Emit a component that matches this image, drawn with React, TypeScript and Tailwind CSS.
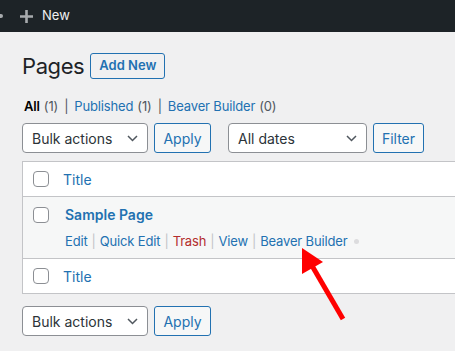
import React from "react";

const Chevron = () => (
  <svg width="11" height="7" viewBox="0 0 11 7" fill="none">
    <path d="M1 1L5.5 5.5L10 1" stroke="#50575e" strokeWidth="1.5" />
  </svg>
);

const Select = ({ label, width }: { label: string; width: string }) => (
  <div
    className={`${width} h-[30px] flex items-center justify-between pl-[9px] pr-[9px] bg-white border border-[#8c8f94] rounded-[4px] text-[14px] text-[#2c3338]`}
  >
    <span>{label}</span>
    <Chevron />
  </div>
);

const Button = ({ label, width }: { label: string; width: string }) => (
  <div
    className={`${width} h-[30px] flex items-center justify-center bg-[#f6f7f7] border border-[#2271b1] rounded-[3px] text-[14px] text-[#2271b1]`}
  >
    {label}
  </div>
);

const Checkbox = () => (
  <div className="w-4 h-4 shrink-0 bg-white border border-[#8c8f94] rounded-[4px]" />
);

const Sep = () => <span className="mx-[4px] text-[#c3c4c7]">|</span>;

export default function App() {
  return (
    <div
      className="relative w-[455px] h-[351px] overflow-hidden bg-[#f0f0f1] text-[13px] text-[#3c434a]"
      style={{ fontFamily: "Inter, 'Noto Sans', sans-serif" }}
    >
      {/* admin bar */}
      <div className="h-8 bg-[#1d2327] flex items-center">
        <div className="w-[3px] h-[4px] bg-[#a7aaad] rounded-r-sm" />
        <svg width="13" height="13" viewBox="0 0 13 13" className="ml-[17px]">
          <path d="M6.5 0v13M0 6.5h13" stroke="#a7aaad" strokeWidth="2.6" />
        </svg>
        <span className="ml-[9px] text-[#f0f0f1] text-[13px]">New</span>
      </div>

      <div className="pl-[22px]">
        {/* heading */}
        <div className="flex items-center mt-[21px] h-[26px]">
          <h1 className="text-[22px] tracking-[-0.4px] leading-none text-[#1d2327]">Pages</h1>
          <div className="ml-[6px] w-[75px] h-[26px] flex items-center justify-center border border-[#2271b1] rounded-[3px] text-[13px] font-semibold text-[#2271b1]">
            Add New
          </div>
        </div>

        {/* subsubsub */}
        <div className="mt-[21px] pl-[2px] flex items-center h-[13px] text-[13px] tracking-[-0.15px] text-[#50575e]">
          <span className="font-semibold text-black">All</span>
          <span className="ml-1">(1)</span>
          <span className="mx-[6px]">|</span>
          <span className="text-[#2271b1]">Published</span>
          <span className="ml-1">(1)</span>
          <span className="mx-[6px]">|</span>
          <span className="text-[#2271b1]">Beaver Builder</span>
          <span className="ml-1">(0)</span>
        </div>

        {/* top tablenav */}
        <div className="mt-[10px] flex items-center">
          <Select label="Bulk actions" width="w-[126px]" />
          <div className="ml-[6px]">
            <Button label="Apply" width="w-[57px]" />
          </div>
          <div className="ml-[17px]">
            <Select label="All dates" width="w-[139px]" />
          </div>
          <div className="ml-[6px]">
            <Button label="Filter" width="w-[51px]" />
          </div>
        </div>

        {/* table */}
        <div className="mt-[8px] w-[520px] border border-[#c3c4c7] bg-white">
          <div className="h-[35px] flex items-center pl-[10px] border-b border-[#c3c4c7]">
            <Checkbox />
            <span className="ml-[14px] text-[14px] text-[#2271b1]">Title</span>
          </div>
          <div className="h-[62px] bg-[#f6f7f7] pl-[10px] pt-[10px] border-b border-[#c3c4c7]">
            <div className="flex items-center h-4">
              <Checkbox />
              <span className="ml-[16px] text-[14px] leading-4 font-semibold text-[#2271b1]">
                Sample Page
              </span>
            </div>
            <div className="mt-[10px] ml-[32px] h-4 flex items-center text-[13px] leading-4 tracking-[-0.15px] text-[#2271b1]">
              <span>Edit</span>
              <Sep />
              <span>Quick Edit</span>
              <Sep />
              <span className="text-[#b32d2e]">Trash</span>
              <Sep />
              <span>View</span>
              <Sep />
              <span>Beaver Builder</span>
              <span className="ml-[6px] w-[5px] h-[5px] rounded-full bg-[#dcdcde]" />
            </div>
          </div>
          <div className="h-[34px] flex items-center pl-[10px]">
            <Checkbox />
            <span className="ml-[14px] text-[14px] text-[#2271b1]">Title</span>
          </div>
        </div>

        {/* bottom tablenav */}
        <div className="mt-[12px] flex items-center">
          <Select label="Bulk actions" width="w-[126px]" />
          <div className="ml-[6px]">
            <Button label="Apply" width="w-[57px]" />
          </div>
        </div>
      </div>

      {/* red arrow annotation */}
      <svg
        className="absolute left-0 top-0 pointer-events-none"
        width="455"
        height="351"
        viewBox="0 0 455 351"
      >
        <path d="M343 319L311 264" stroke="#ff0000" strokeWidth="5" />
        <path d="M302 248L302 274L323 262Z" fill="#ff0000" />
      </svg>
    </div>
  );
}
